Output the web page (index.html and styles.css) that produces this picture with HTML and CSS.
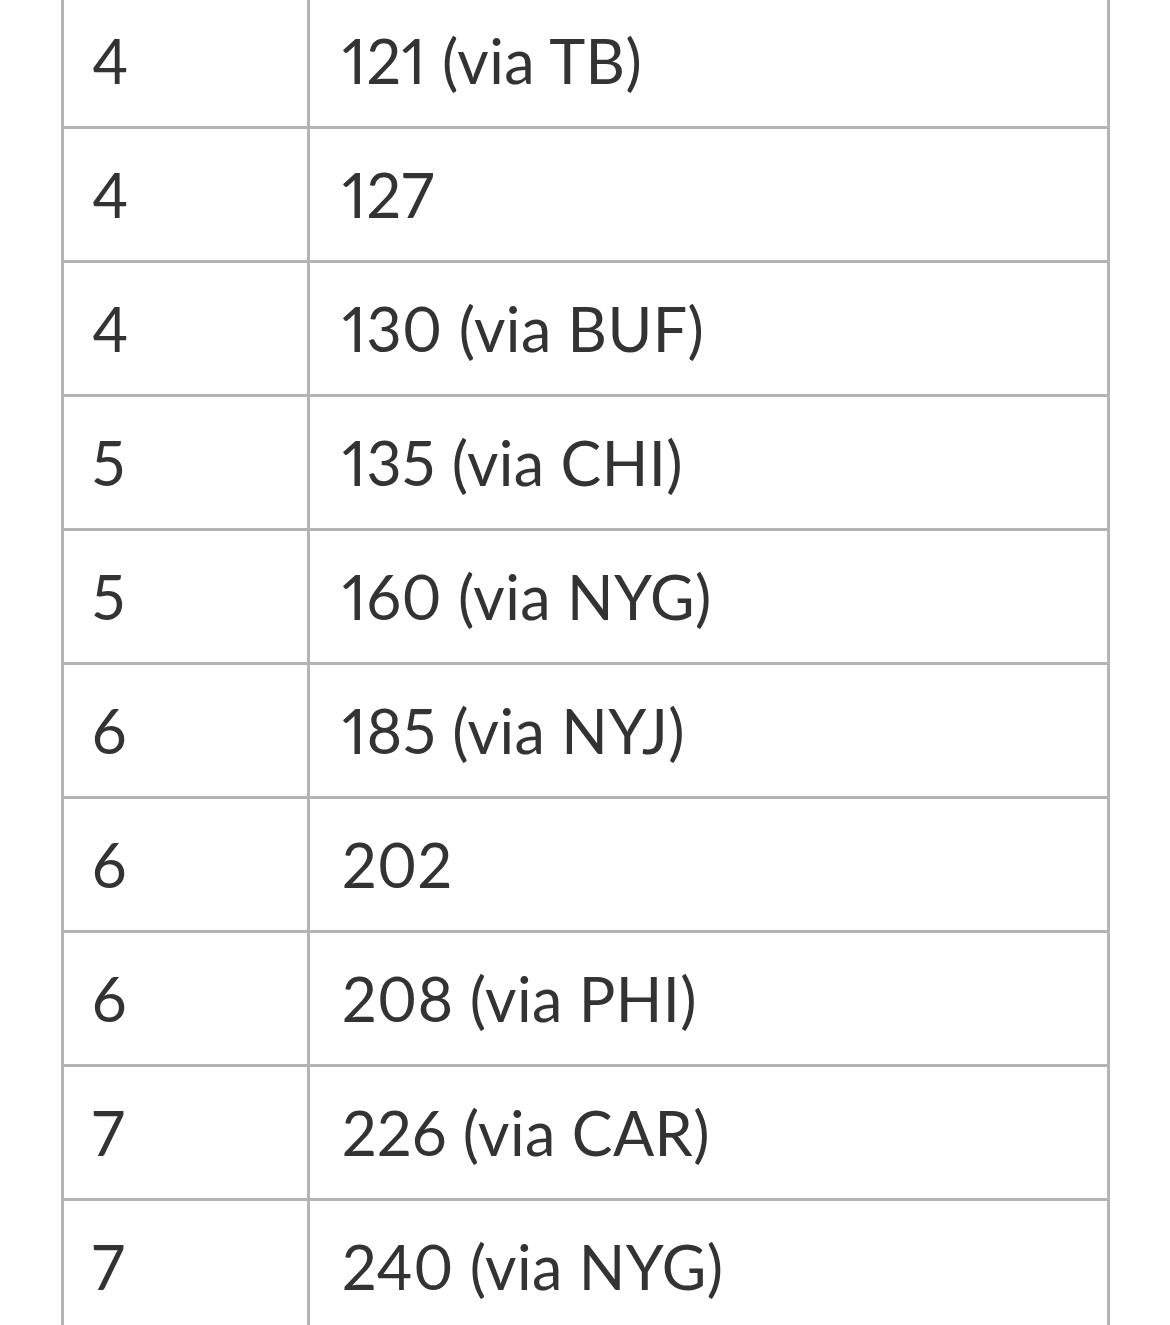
FILE: index.html
```html
<!DOCTYPE html>
<html>
<head>
<meta charset="utf-8">
<link rel="stylesheet" href="styles.css">
</head>
<body>
<table class="picks">
  <tbody>
    <tr><td class="round">4</td><td class="pick">121 (via TB)</td></tr>
    <tr><td class="round">4</td><td class="pick">127</td></tr>
    <tr><td class="round">4</td><td class="pick">130 (via BUF)</td></tr>
    <tr><td class="round">5</td><td class="pick">135 (via CHI)</td></tr>
    <tr><td class="round">5</td><td class="pick">160 (via NYG)</td></tr>
    <tr><td class="round">6</td><td class="pick">185 (via NYJ)</td></tr>
    <tr><td class="round">6</td><td class="pick">202</td></tr>
    <tr><td class="round">6</td><td class="pick">208 (via PHI)</td></tr>
    <tr><td class="round">7</td><td class="pick">226 (via CAR)</td></tr>
    <tr><td class="round">7</td><td class="pick">240 (via NYG)</td></tr>
  </tbody>
</table>
</body>
</html>
```

FILE: styles.css
```css
html, body {
  margin: 0;
  padding: 0;
  background: #ffffff;
}

body {
  font-family: "Lato", "Open Sans", sans-serif;
  color: #333333;
  overflow: hidden;
}

.picks {
  margin: -8px 0 0 61px;
  border-collapse: separate;
  border-spacing: 0;
  border-top: 3px solid #b4b4b4;
  border-left: 3px solid #b4b4b4;
  width: 1049px;
  table-layout: fixed;
}

.picks td {
  height: 131px;
  padding: 0 0 0 28px;
  border-right: 3px solid #b4b4b4;
  border-bottom: 3px solid #b4b4b4;
  vertical-align: middle;
  font-size: 61px;
  line-height: 1;
  white-space: nowrap;
  box-sizing: content-box;
  font-variant-numeric: proportional-nums;
  letter-spacing: 0.4px;
}

.picks .round {
  width: 215px;
}

.picks .pick {
  padding-left: 32px;
}
```
